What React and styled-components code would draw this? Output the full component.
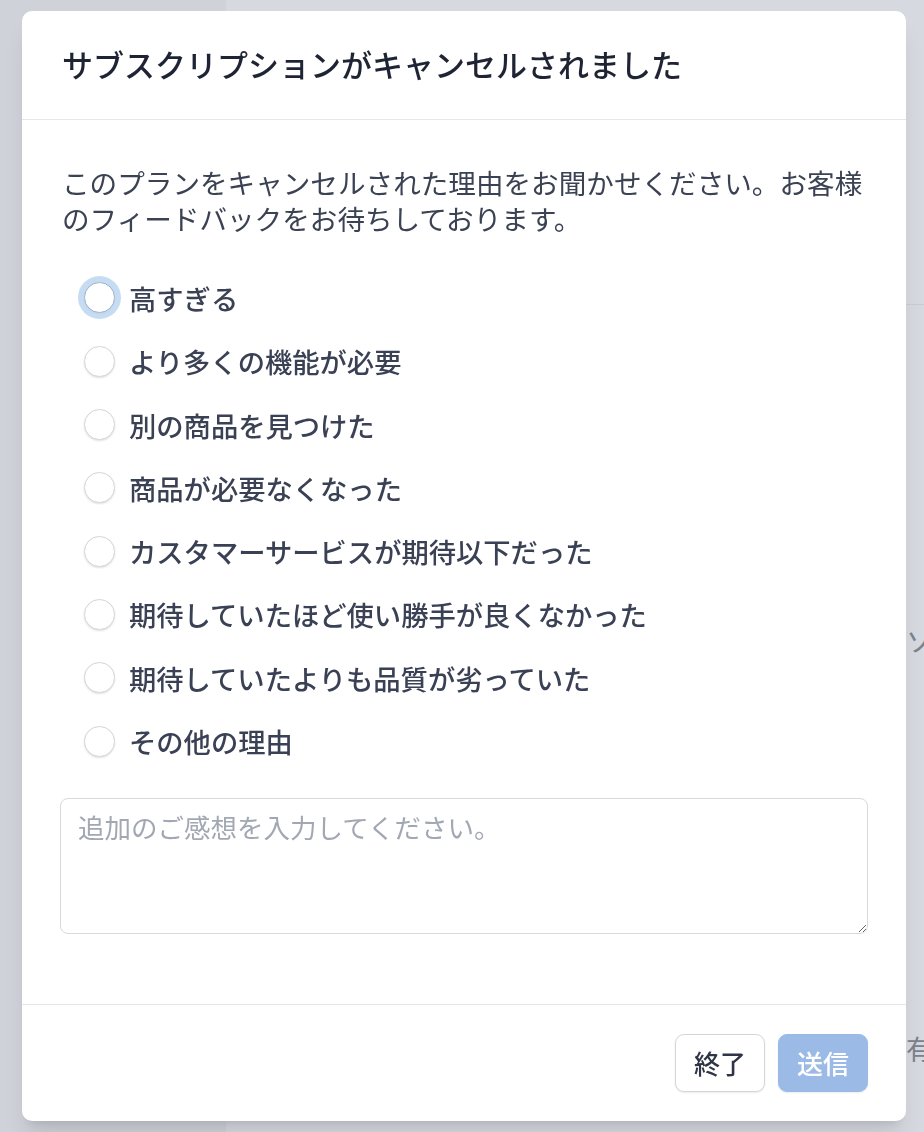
import React from "react";
import styled, { createGlobalStyle } from "styled-components";

const GlobalStyle = createGlobalStyle`
  html, body {
    margin: 0;
    padding: 0;
    height: 100%;
  }
  body {
    font-family: "Noto Sans CJK JP", "Noto Sans", sans-serif;
    overflow: hidden;
  }
`;

const Page = styled.div`
  display: flex;
  width: 924px;
  height: 1132px;
`;

const Sidebar = styled.aside`
  width: 226px;
  flex-shrink: 0;
  background: #cfd2d9;
`;

const Main = styled.main`
  flex: 1;
  min-width: 0;
  overflow: hidden;
  background: #d6d9df;
  display: flex;
  flex-direction: column;
`;

const TopBand = styled.div`
  height: 304px;
  flex-shrink: 0;
  border-bottom: 1px solid #c9ccd4;
`;

const BehindRow = styled.div`
  padding-left: 680px;
  margin-top: ${(p) => p.$top}px;
  font-size: 27px;
  line-height: 36px;
  color: #7d828c;
  white-space: nowrap;
`;

const Overlay = styled.div`
  position: fixed;
  inset: 0;
  display: flex;
  align-items: center;
  justify-content: center;
  padding-left: 4px;
`;

const Modal = styled.div`
  width: 884px;
  background: #ffffff;
  border-radius: 10px;
  box-shadow: 0 20px 25px -5px rgba(0, 0, 0, 0.1), 0 8px 10px -6px rgba(0, 0, 0, 0.1);
  overflow: hidden;
`;

const Header = styled.div`
  padding: 33px 40px 35px;
  border-bottom: 1.5px solid #e5e7eb;
`;

const Title = styled.h2`
  margin: 0;
  font-size: 31px;
  line-height: 40px;
  font-weight: 500;
  color: #1f2434;
`;

const Body = styled.div`
  padding: 44px 39px 70px 40px;
`;

const Description = styled.p`
  margin: 0 -12px 30px 0;
  font-size: 27.6px;
  line-height: 36px;
  color: #3b4253;
`;

const Options = styled.div`
  display: flex;
  flex-direction: column;
  padding-left: 22px;
`;

const Option = styled.label`
  display: flex;
  align-items: center;
  gap: 14px;
  height: 63.3px;
  font-size: 27.3px;
  font-weight: 500;
  color: #3a4154;
  cursor: pointer;
`;

const Radio = styled.span`
  width: 31px;
  height: 31px;
  box-sizing: border-box;
  border-radius: 50%;
  border: 1.5px solid ${(p) => (p.$focused ? "#9fb3c8" : "#d4d7dd")};
  background: #fff;
  box-shadow: ${(p) =>
    p.$focused
      ? "0 0 0 6px rgba(160, 196, 234, 0.6), 0 1px 2px rgba(0,0,0,0.08)"
      : "0 1px 2px rgba(0, 0, 0, 0.12)"};
  flex-shrink: 0;
`;

const TextArea = styled.textarea`
  display: block;
  width: calc(100% + 3px);
  height: 136px;
  margin-top: 25px;
  margin-left: -2px;
  box-sizing: border-box;
  padding: 10px 17px;
  border: 1.5px solid #d6d9de;
  border-radius: 8px;
  font-family: "Noto Sans CJK JP", "Noto Sans", sans-serif;
  font-size: 26.5px;
  line-height: 36px;
  color: #374151;
  outline: none;

  &::placeholder {
    color: #a2a8b3;
  }
`;

const Footer = styled.div`
  display: flex;
  justify-content: flex-end;
  gap: 13px;
  padding: 29px 38px 29px;
  border-top: 1.5px solid #e5e7eb;
`;

const Button = styled.button`
  height: 58px;
  padding: 0 18px;
  border-radius: 9px;
  font-family: "Noto Sans CJK JP", "Noto Sans", sans-serif;
  font-size: 26px;
  font-weight: 500;
  border: 1.5px solid ${(p) => (p.$primary ? "#9bbbe6" : "#d2d5db")};
  background: ${(p) => (p.$primary ? "#9bbbe6" : "#ffffff")};
  color: ${(p) => (p.$primary ? "#ffffff" : "#2f3546")};
  box-shadow: 0 1px 2px rgba(0, 0, 0, 0.08);
  cursor: pointer;
`;

const reasons = [
  "高すぎる",
  "より多くの機能が必要",
  "別の商品を見つけた",
  "商品が必要なくなった",
  "カスタマーサービスが期待以下だった",
  "期待していたほど使い勝手が良くなかった",
  "期待していたよりも品質が劣っていた",
  "その他の理由",
];

export default function App() {
  return (
    <>
      <GlobalStyle />
      <Page>
        <Sidebar />
        <Main>
          <TopBand />
          <BehindRow $top={318}>ソフト</BehindRow>
          <BehindRow $top={372}>有効</BehindRow>
        </Main>
      </Page>
      <Overlay>
        <Modal>
          <Header>
            <Title>サブスクリプションがキャンセルされました</Title>
          </Header>
          <Body>
            <Description>
              このプランをキャンセルされた理由をお聞かせください。お客様のフィードバックをお待ちしております。
            </Description>
            <Options>
              {reasons.map((r, i) => (
                <Option key={r}>
                  <Radio $focused={i === 0} />
                  {r}
                </Option>
              ))}
            </Options>
            <TextArea placeholder="追加のご感想を入力してください。" />
          </Body>
          <Footer>
            <Button>終了</Button>
            <Button $primary>送信</Button>
          </Footer>
        </Modal>
      </Overlay>
    </>
  );
}
